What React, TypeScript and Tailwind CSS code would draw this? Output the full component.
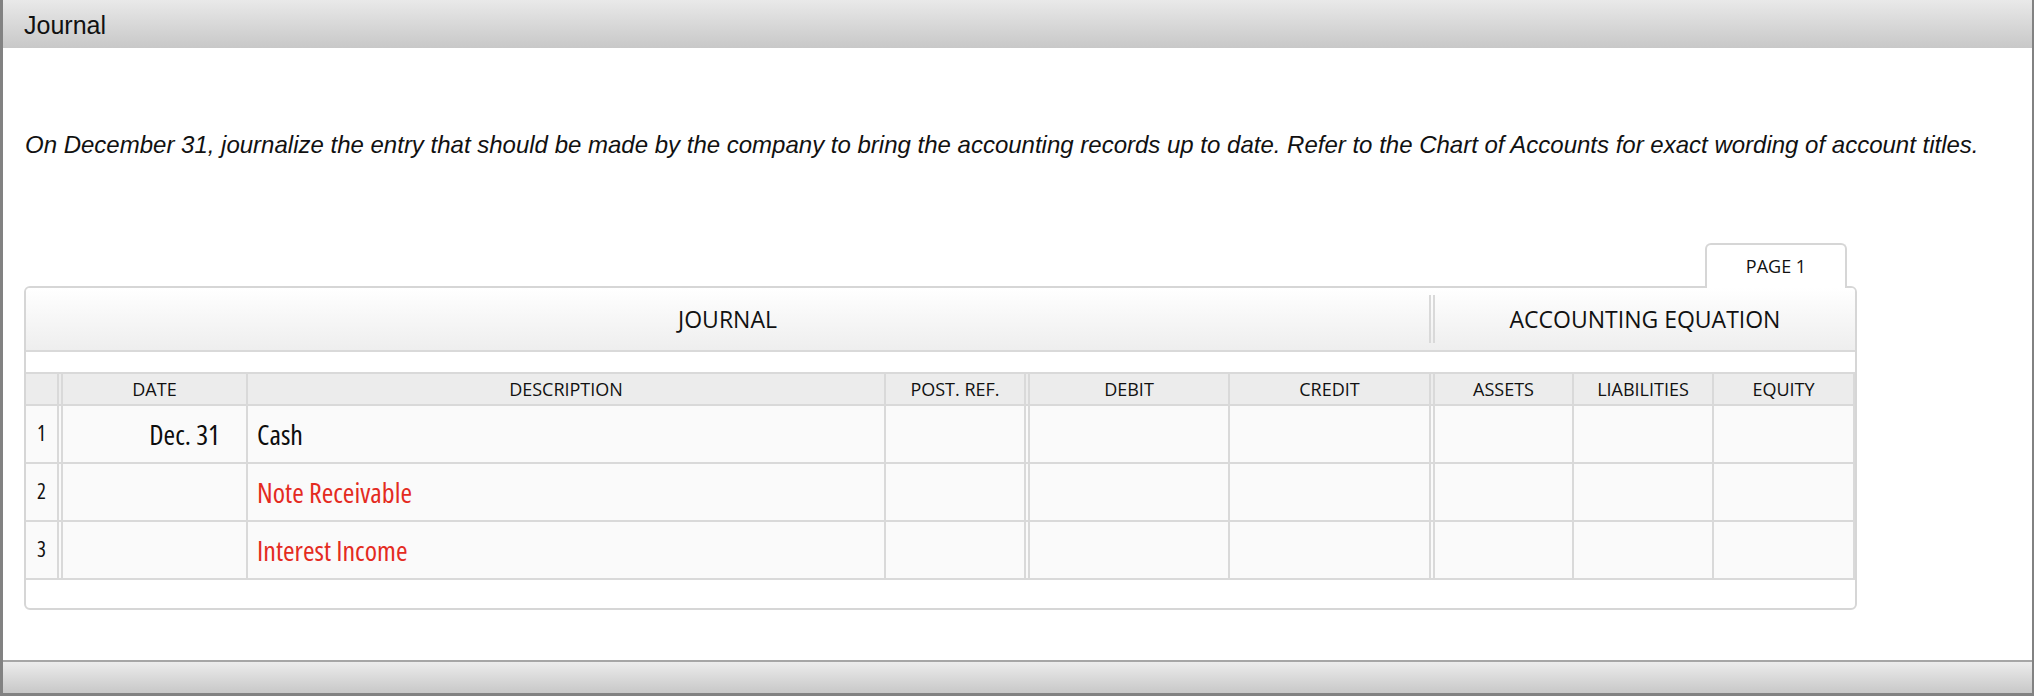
const narrow = "font-['Open_Sans',Roboto,sans-serif] font-stretch-condensed"
const sans = "font-['Open_Sans',Roboto,sans-serif]"
const line = 'border-[#d9d9d9]'
const single = `border-r-2 ${line}`
const double = `border-r-[6px] border-double ${line}`
const cols = 'grid grid-cols-[37px_185px_638px_144px_200px_205px_139px_140px_141px]'

const headers = [
  { label: '', cls: double },
  { label: 'DATE', cls: single },
  { label: 'DESCRIPTION', cls: single },
  { label: 'POST. REF.', cls: double },
  { label: 'DEBIT', cls: single },
  { label: 'CREDIT', cls: double },
  { label: 'ASSETS', cls: single },
  { label: 'LIABILITIES', cls: single },
  { label: 'EQUITY', cls: single },
]

const rows = [
  { n: 1, date: 'Dec. 31', desc: 'Cash', red: false },
  { n: 2, date: '', desc: 'Note Receivable', red: true },
  { n: 3, date: '', desc: 'Interest Income', red: true },
]

function Row({ n, date, desc, red }: { n: number; date: string; desc: string; red: boolean }) {
  return (
    <div className={`${cols} h-[58px] border-b-2 ${line} bg-[#fafafa] ${narrow}`}>
      <div className={`${double} flex items-center justify-center text-[21px] text-[#111]`}>{n}</div>
      <div className={`${single} flex items-center justify-end pr-[26px] text-[28px] text-[#0d0d0d]`}>{date}</div>
      <div className={`${single} flex items-center pl-[9px] text-[28px] ${red ? 'text-[#e42b1f]' : 'text-[#0d0d0d]'}`}>
        {desc}
      </div>
      <div className={double} />
      <div className={single} />
      <div className={double} />
      <div className={single} />
      <div className={single} />
      <div className={single} />
    </div>
  )
}

export default function App() {
  return (
    <div className="w-[2034px] h-[696px] flex flex-col border-l-[3px] border-r-[2px] border-b-[3px] border-[#828282] bg-white">
      <div className="h-[48px] shrink-0 flex items-center pl-[21px] pt-[3px] bg-gradient-to-b from-[#e9e9e9] to-[#c8c8c8] font-['Liberation_Sans',Arial,sans-serif] text-[25px] text-[#111]">
        Journal
      </div>

      <div className="flex-1 px-[21px] pt-[83px]">
        <p className="ml-[1px] leading-[28px] italic text-[24px] text-[#111] font-['Liberation_Sans',Arial,sans-serif] whitespace-nowrap">
          On December 31, journalize the entry that should be made by the company to bring the accounting records up to
          date. Refer to the Chart of Accounts for exact wording of account titles.
        </p>

        <div className="w-[1833px] mt-[84px]">
          <div className="flex justify-end pr-[10px]">
            <div
              className={`relative z-10 -mb-[2px] w-[142px] h-[45px] rounded-t-[6px] border-2 border-b-0 border-[#d6d6d6] bg-white flex items-center justify-center text-[18px] text-[#111] ${sans}`}
            >
              PAGE 1
            </div>
          </div>

          <div className="rounded-[6px] border-2 border-[#d6d6d6] bg-white overflow-hidden">
            <div className={`h-[64px] flex items-center border-b-2 ${line} bg-gradient-to-b from-white to-[#eeeeee] ${sans} text-[23px] text-[#111]`}>
              <div className="w-[1403px] text-center">JOURNAL</div>
              <div className={`w-[6px] h-[48px] border-x-2 ${line}`} />
              <div className="flex-1 text-center">ACCOUNTING EQUATION</div>
            </div>

            <div className="h-[20px]" />

            <div className={`${cols} h-[34px] border-y-2 ${line} bg-[#ececec] ${sans} text-[18px] text-[#111]`}>
              {headers.map((h, i) => (
                <div key={i} className={`${h.cls} flex items-center justify-center`}>
                  {h.label}
                </div>
              ))}
            </div>

            {rows.map((r) => (
              <Row key={r.n} {...r} />
            ))}

            <div className="h-[28px]" />
          </div>
        </div>
      </div>

      <div className="h-[33px] shrink-0 border-t-2 border-[#a6a6a6] bg-gradient-to-b from-[#ececec] to-[#c8c8c8]" />
    </div>
  )
}
